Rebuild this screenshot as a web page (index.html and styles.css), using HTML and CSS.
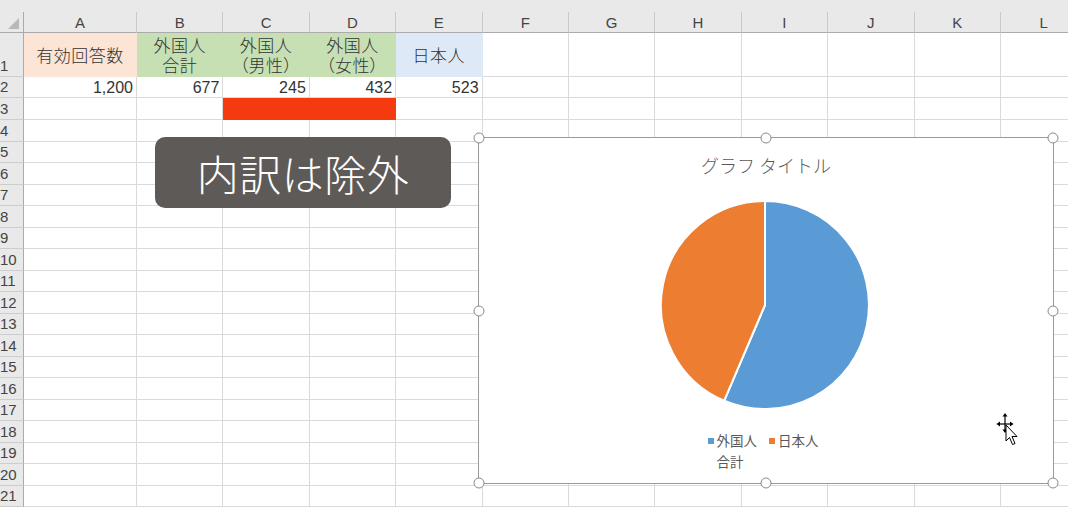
FILE: index.html
```html
<!DOCTYPE html>
<html lang="ja">
  <head>
    <meta charset="UTF-8" />
    <meta name="viewport" content="width=device-width, initial-scale=1.0" />
    <title>Book1 - Excel</title>
    <link rel="stylesheet" href="styles.css">
  </head>

  <body>
    <div id="workspace">
      <div id="sheet" class="sheet"></div>

      <!-- caption laid over the sheet -->
      <div class="caption">内訳は除外</div>

      <!-- selected chart object -->
      <div class="chart">
        <span class="handle tl"></span>
        <span class="handle tc"></span>
        <span class="handle tr"></span>
        <span class="handle ml"></span>
        <span class="handle mr"></span>
        <span class="handle bl"></span>
        <span class="handle bc"></span>
        <span class="handle br"></span>

        <div class="chart-title">グラフ タイトル</div>
        <svg class="pie" width="210" height="210" viewBox="0 0 210 210">
          <path d="M105 105 L105 1 A104 104 0 1 1 64.2 200.7 Z" fill="#5b9bd5" stroke="#fff" stroke-width="2" />
          <path d="M105 105 L64.2 200.7 A104 104 0 0 1 105 1 Z" fill="#ed7d31" stroke="#fff" stroke-width="2" />
        </svg>
        <div class="legend">
          <div class="legend-item">
            <span class="swatch blue"></span>
            <span>外国人<br>合計</span>
          </div>
          <div class="legend-item">
            <span class="swatch orange"></span>
            <span>日本人</span>
          </div>
        </div>
      </div>

      <!-- move cursor -->
      <svg class="cursor" width="28" height="36" viewBox="0 0 28 36">
        <g stroke="#000" stroke-width="1.2" fill="none">
          <line x1="9" y1="3" x2="9" y2="20" />
          <line x1="2" y1="12" x2="16" y2="12" />
        </g>
        <g fill="#000">
          <polygon points="9,1 6.5,4.5 11.5,4.5" />
          <polygon points="0.5,12 4,9.5 4,14.5" />
          <polygon points="17.5,12 14,9.5 14,14.5" />
          <polygon points="9,21 6.5,17.5 11.5,17.5" />
        </g>
        <polygon points="10,13 10,29 13.5,25.5 16.5,32.5 19,31.5 16,24.5 21,24.5" fill="#fff" stroke="#000" stroke-width="1" stroke-linejoin="round" />
      </svg>
    </div>

    <script src="sheet.js"></script>
  </body>
</html>
```

FILE: styles.css
```css
body {
  margin: 0;
  padding: 0;
  background-color: #fff;
  overflow: hidden;
  font-family: "Liberation Sans", "Noto Sans CJK JP", sans-serif;
  color: #333;
}

#workspace {
  position: relative;
  width: 1068px;
  height: 508px;
  overflow: hidden;
}

.sheet {
  display: grid;
  grid-template-columns: 24px 113px repeat(11, 86.4px);
  grid-template-rows: 21px 44px 21px 22px repeat(18, 21.5px);
  width: max-content;
  padding-top: 12px;
  background-color: #e9e9e9;
}

.sheet > div {
  box-sizing: border-box;
  display: flex;
  align-items: center;
  overflow: hidden;
  white-space: nowrap;
}

/* column letters */
.col-head {
  justify-content: center;
  background-color: #e9e9e9;
  border-right: 1px solid #c9c9c9;
  border-bottom: 1px solid #ababab;
  font-size: 15px;
  color: #444;
}

.corner {
  justify-content: flex-end;
  align-items: flex-end !important;
  padding: 0 4px 3px 0;
  background-color: #e9e9e9;
  border-right: 1px solid #ababab;
  border-bottom: 1px solid #ababab;
}

.corner .tri {
  width: 0;
  height: 0;
  border-left: 11px solid transparent;
  border-bottom: 11px solid #b8b8b8;
}

/* row numbers */
.row-head {
  align-items: flex-end !important;
  background-color: #e9e9e9;
  border-right: 1px solid #ababab;
  border-bottom: 1px solid #cdcdcd;
  font-size: 15px;
  color: #444;
  line-height: 20px;
}

.cell {
  background-color: #fff;
  border-right: 1px solid #dadada;
  border-bottom: 1px solid #dadada;
  font-size: 17px;
  padding: 0 3px;
}

.sheet > .cell.label {
  flex-direction: column;
  justify-content: center;
  overflow: visible;
  text-align: center;
  font-family: "Noto Sans CJK JP", sans-serif;
  font-weight: 300;
  font-feature-settings: "palt";
  letter-spacing: 0.5px;
}

.cell.label .ln {
  display: block;
  height: 20px;
  line-height: 20px;
}

.cell.num {
  justify-content: flex-end;
  font-size: 16px;
  padding-top: 2px;
}

.peach {
  background-color: #fce4d6 !important;
  border-color: #fce4d6 !important;
}

.green {
  background-color: #c6dfb3 !important;
  border-color: #c6dfb3 !important;
}

.blue-fill {
  background-color: #dde9f6 !important;
  border-color: #dde9f6 !important;
}

.red {
  background-color: #f53a0f !important;
  border-color: #f53a0f !important;
}

/* caption box */
.caption {
  position: absolute;
  left: 155px;
  top: 137px;
  width: 296px;
  height: 71px;
  border-radius: 10px;
  background-color: #5e5a57;
  color: #fff;
  font-family: "Noto Sans CJK JP", sans-serif;
  font-weight: 300;
  font-size: 42px;
  letter-spacing: 0.5px;
  display: flex;
  align-items: center;
  justify-content: center;
}

/* chart */
.chart {
  position: absolute;
  left: 478px;
  top: 137px;
  width: 576px;
  height: 347px;
  box-sizing: border-box;
  border: 1px solid #9a9a9a;
  background-color: #fff;
  display: flex;
  flex-direction: column;
  align-items: center;
  font-family: "Noto Sans CJK JP", sans-serif;
  color: #595959;
}

.chart-title {
  margin-top: 15px;
  font-size: 18px;
  line-height: 24px;
  font-weight: 300;
}

.pie {
  margin-top: 23px;
  margin-left: -2px;
}

.legend {
  display: flex;
  gap: 12px;
  margin-top: 20px;
  margin-left: -6px;
  font-size: 13.5px;
  line-height: 21px;
}

.legend-item {
  display: flex;
  align-items: flex-start;
}

.swatch {
  width: 6px;
  height: 6px;
  margin: 8px 3px 0 0;
}

.swatch.blue {
  background-color: #5b9bd5;
}

.swatch.orange {
  background-color: #ed7d31;
}

.handle {
  position: absolute;
  width: 9px;
  height: 9px;
  border: 1.5px solid #8a8a8a;
  border-radius: 50%;
  background-color: #fff;
  transform: translate(-50%, -50%);
}

.handle.tl { left: 0; top: 0; }
.handle.tc { left: 50%; top: 0; }
.handle.tr { left: 100%; top: 0; }
.handle.ml { left: 0; top: 50%; }
.handle.mr { left: 100%; top: 50%; }
.handle.bl { left: 0; top: 100%; }
.handle.bc { left: 50%; top: 100%; }
.handle.br { left: 100%; top: 100%; }

.cursor {
  position: absolute;
  left: 996px;
  top: 412px;
}
```

FILE: sheet.js
```js
// Builds the worksheet grid: column letters, row numbers and cell values
const columns = ["A", "B", "C", "D", "E", "F", "G", "H", "I", "J", "K", "L"];
const rowCount = 21;

const cells = {
  A1: { lines: ["有効回答数"], cls: "label peach" },
  B1: { lines: ["外国人", "合計"], cls: "label green" },
  C1: { lines: ["外国人", "（男性）"], cls: "label green" },
  D1: { lines: ["外国人", "（女性）"], cls: "label green" },
  E1: { lines: ["日本人"], cls: "label blue-fill" },
  A2: { text: "1,200", cls: "num" },
  B2: { text: "677", cls: "num" },
  C2: { text: "245", cls: "num" },
  D2: { text: "432", cls: "num" },
  E2: { text: "523", cls: "num" },
  C3: { text: "", cls: "red" },
  D3: { text: "", cls: "red" },
};

const sheet = document.querySelector("#sheet");

function addDiv(className, html) {
  const div = document.createElement("div");
  div.className = className;
  div.innerHTML = html || "";
  sheet.appendChild(div);
  return div;
}

addDiv("corner", '<span class="tri"></span>');
columns.forEach((name) => addDiv("col-head", name));

for (let row = 1; row <= rowCount; row++) {
  addDiv("row-head", String(row));
  columns.forEach((name) => {
    const data = cells[name + row];
    if (!data) {
      addDiv("cell", "");
    } else if (data.lines) {
      // header labels: one block per line
      const html = data.lines.map((l) => `<span class="ln">${l}</span>`).join("");
      addDiv("cell " + data.cls, html);
    } else {
      addDiv("cell " + data.cls, data.text);
    }
  });
}
```
